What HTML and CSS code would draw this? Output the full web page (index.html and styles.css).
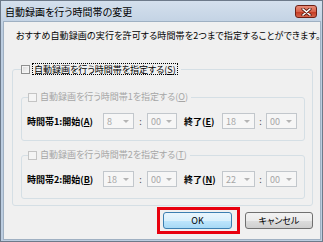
FILE: index.html
```html
<!DOCTYPE html>
<html lang="ja">
<head>
    <meta charset="UTF-8">
    <title>自動録画を行う時間帯の変更</title>
    <link rel="stylesheet" href="styles.css">
</head>
<body>

    <div class="window">
        <div class="titlebar">
            <span class="title">自動録画を行う時間帯の変更</span>
            <span class="close-btn">
                <svg width="11" height="8" viewBox="0 0 11 8">
                    <path d="M2 1 L9 7 M9 1 L2 7" stroke="#5a1d14" stroke-width="3.2" stroke-linecap="round"/>
                    <path d="M2 1 L9 7 M9 1 L2 7" stroke="#fff" stroke-width="1.6" stroke-linecap="round"/>
                </svg>
            </span>
        </div>

        <div class="client">
            <p class="message">おすすめ自動録画の実行を許可する時間帯を2つまで指定することができます。</p>

            <fieldset class="group outer">
                <legend>
                    <label class="check">
                        <span class="box"></span>
                        <span class="focus">自動録画を行う時間帯を指定する(<u>S</u>)</span>
                    </label>
                </legend>

                <fieldset class="group inner">
                    <legend>
                        <label class="check disabled">
                            <span class="box"></span>
                            <span class="text">自動録画を行う時間帯1を指定する(<u>O</u>)</span>
                        </label>
                    </legend>
                    <div class="row">
                        <span class="row-label">時間帯1:開始(<u>A</u>)</span>
                        <span class="combo c1">8<i class="arrow"></i></span>
                        <span class="colon">:</span>
                        <span class="combo c2">00<i class="arrow"></i></span>
                        <span class="end-label">終了(<u>E</u>)</span>
                        <span class="combo c3">18<i class="arrow"></i></span>
                        <span class="colon narrow">:</span>
                        <span class="combo c4">00<i class="arrow"></i></span>
                    </div>
                </fieldset>

                <fieldset class="group inner second">
                    <legend>
                        <label class="check disabled">
                            <span class="box"></span>
                            <span class="text">自動録画を行う時間帯2を指定する(<u>T</u>)</span>
                        </label>
                    </legend>
                    <div class="row">
                        <span class="row-label">時間帯2:開始(<u>B</u>)</span>
                        <span class="combo c1">18<i class="arrow"></i></span>
                        <span class="colon">:</span>
                        <span class="combo c2">00<i class="arrow"></i></span>
                        <span class="end-label">終了(<u>N</u>)</span>
                        <span class="combo c3">22<i class="arrow"></i></span>
                        <span class="colon narrow">:</span>
                        <span class="combo c4">00<i class="arrow"></i></span>
                    </div>
                </fieldset>
            </fieldset>

            <div class="buttons">
                <span class="highlight"><button class="btn default">OK</button></span>
                <button class="btn cancel">キャンセル</button>
            </div>
        </div>
    </div>

</body>
</html>
```

FILE: styles.css
```css
/* ダイアログ全体 */
body {
    margin: 0;
    font-family: "Noto Sans CJK JP", sans-serif;
    font-size: 9px;
    font-feature-settings: "palt";
    color: #000;
}

.window {
    width: 323px;
    height: 242px;
    box-sizing: border-box;
    display: flex;
    flex-direction: column;
    background: linear-gradient(#d4e0ed, #bccde0 30px, #bccde0);
    border: 1px solid #6d7a8a;
    padding: 0 2px 2px 3px;
}

/* タイトルバー */
.titlebar {
    height: 21px;
    display: flex;
    align-items: center;
}

.title {
    margin-left: 1px;
    font-size: 10px;
    line-height: 12px;
}

.close-btn {
    margin-left: auto;
    margin-right: 3px;
    width: 22px;
    height: 13px;
    box-sizing: border-box;
    border: 1px solid #6e1f14;
    border-radius: 3px;
    background: linear-gradient(#e88c78, #d8634c 50%, #c3361e 51%, #d5644c);
    display: flex;
    align-items: center;
    justify-content: center;
}

/* クライアント領域 */
.client {
    flex: 1;
    background-color: #f0f0f0;
    box-shadow: 0 0 0 1px #9fb0c2;
    display: flex;
    flex-direction: column;
}

.message {
    margin: 0;
    padding: 8px 0 0 12px;
    line-height: 12px;
    letter-spacing: 0.14px;
    white-space: nowrap;
}

/* グループボックス */
.group {
    margin: 0;
    min-width: 0;
    border: 1px solid #d5dfe5;
    border-radius: 3px;
}

.group legend {
    padding: 0 3px 0 0;
    line-height: 12px;
}

.group.outer {
    margin: 21px 7px 0 8px;
    padding: 16px 7px 6px 8px;
}

.group.inner {
    padding: 10px 6px 11px 6px;
}

.group.inner.second {
    margin-top: 8px;
}

/* チェックボックス */
.check {
    display: flex;
    align-items: center;
    height: 12px;
}

.check .box {
    width: 9px;
    height: 9px;
    box-sizing: border-box;
    border: 1px solid #8e8f8f;
    background: linear-gradient(135deg, #d8d8d8, #fbfbfb);
    box-shadow: inset 0 0 0 1px #f4f4f4;
}

.check .focus {
    margin-left: 2px;
    padding: 0 1px;
    height: 12px;
    line-height: 12px;
    border: 1px dotted #000;
    box-sizing: border-box;
    white-space: nowrap;
}

.check .text {
    margin-left: 3px;
    white-space: nowrap;
}

.check.disabled {
    color: #a6a6a6;
}

.check.disabled .box {
    border-color: #c4c4c4;
    background: #f4f4f4;
    box-shadow: none;
}

/* 時間帯の行 */
.row {
    display: flex;
    align-items: center;
    height: 16px;
}

.row-label {
    width: 76px;
    margin-left: -1px;
    font-weight: bold;
    white-space: nowrap;
}

.end-label {
    width: 38px;
    margin-left: 7px;
    font-weight: bold;
    white-space: nowrap;
}

.colon {
    width: 13px;
    text-align: center;
    color: #555;
}

.colon.narrow {
    width: 11px;
}

.combo {
    height: 16px;
    box-sizing: border-box;
    border: 1px solid #c2c7cc;
    background-color: #f6f6f6;
    color: #a6a6a6;
    padding-left: 3px;
    display: flex;
    align-items: center;
}

.combo.c1 { width: 31px; }
.combo.c2 { width: 30px; }
.combo.c3 { width: 33px; }
.combo.c4 { width: 31px; }

.arrow {
    margin-left: auto;
    margin-right: 4px;
    width: 0;
    height: 0;
    border-left: 3px solid transparent;
    border-right: 3px solid transparent;
    border-top: 3px solid #b4b4b4;
}

/* ボタン */
.buttons {
    display: flex;
    justify-content: flex-end;
    align-items: center;
    gap: 5px;
    margin-top: 1px;
    padding-right: 7px;
}

.highlight {
    display: flex;
    border: 3px solid #e8000e;
    padding: 2px 5px 2px 3px;
}

.btn {
    height: 17px;
    box-sizing: border-box;
    padding: 0;
    border: 1px solid #707070;
    border-radius: 3px;
    background: linear-gradient(#f2f2f2, #ebebeb 50%, #dddddd 51%, #cfcfcf);
    font-family: inherit;
    font-size: 9px;
    font-feature-settings: "palt";
    color: #000;
}

.btn.default {
    width: 69px;
    border-color: #3c7fb1;
    background: linear-gradient(#eaf6fd, #d9f0fc 50%, #bee6fd 51%, #a7d9f5);
}

.btn.cancel {
    width: 68px;
}
```
